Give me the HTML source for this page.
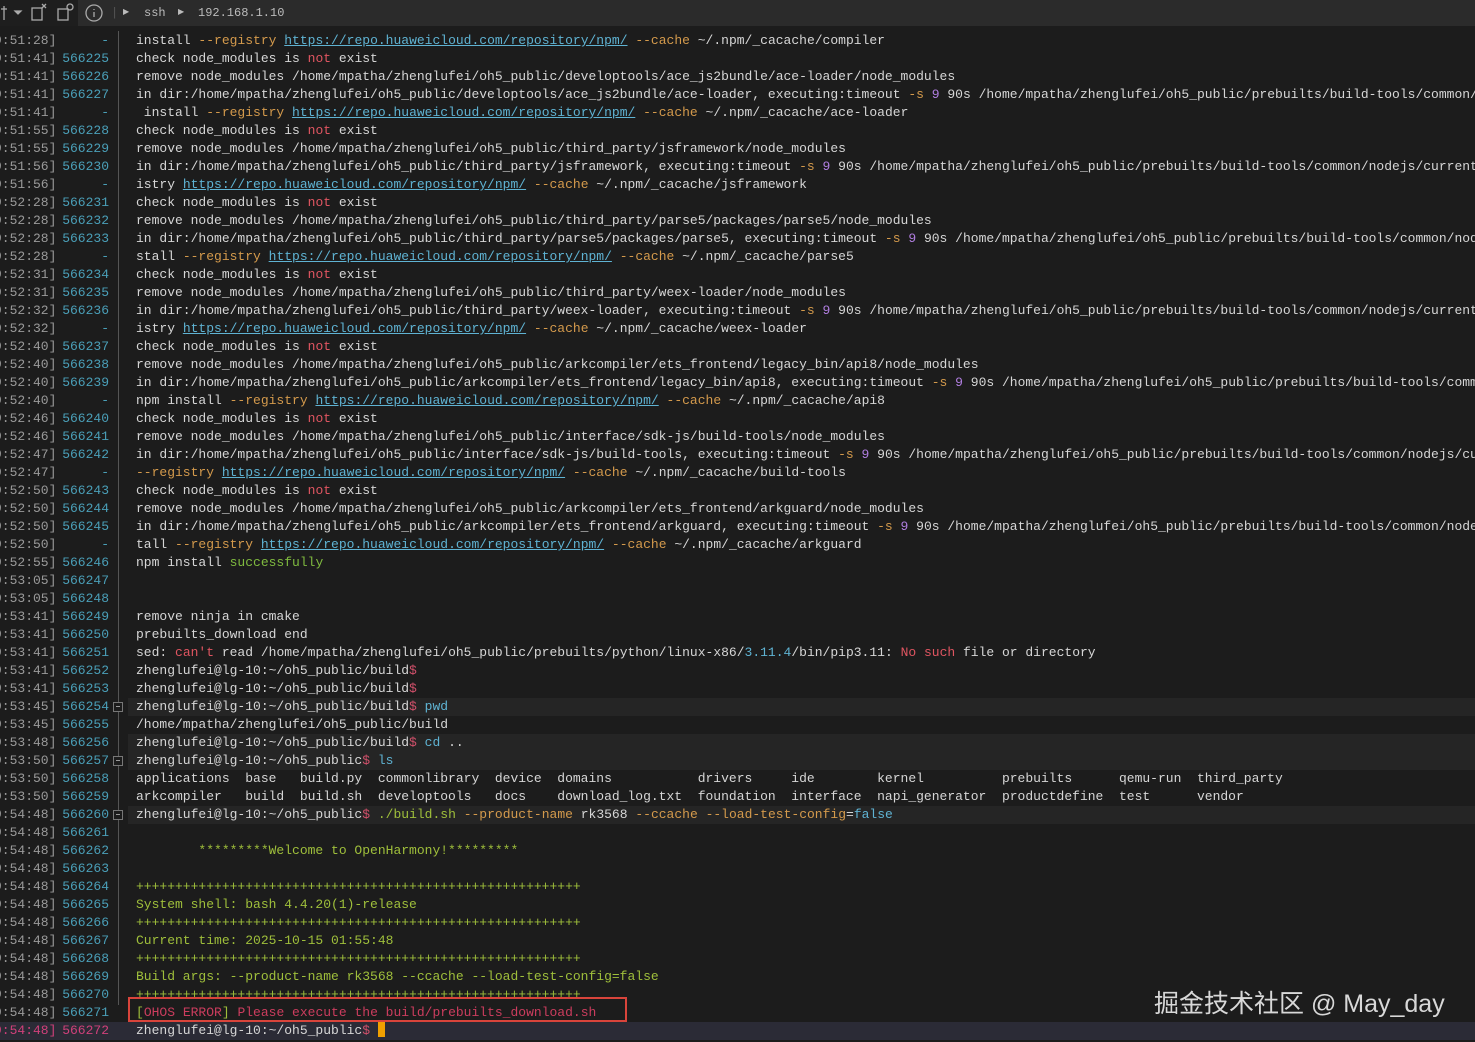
<!DOCTYPE html>
<html><head><meta charset="utf-8"><style>
*{margin:0;padding:0;box-sizing:border-box}
body{width:1475px;height:1042px;overflow:hidden;background:#1c1c1c;font-family:"Liberation Mono",monospace;font-size:13px;color:#d6d6d6;position:relative}
.tb{position:absolute;left:0;top:0;width:1475px;height:26px;background:#1e1e1e}
.tb2{position:absolute;left:78px;top:0;right:0;height:26px;background:#2b2b2b;color:#bbb;font-size:12px;line-height:26px}
#rows{position:absolute;left:0;top:32px;width:1475px}
.r{position:relative;height:18px;line-height:18px;white-space:pre}
.t{position:absolute;left:-6px;color:#9a9a9a}
.n{position:absolute;left:58px;width:51px;text-align:right;color:#4a9fb8}
.x{position:absolute;left:136px;color:#d6d6d6}
.hl{position:absolute;left:128px;right:0;top:0;height:18px;background:#252525}
.o{color:#d49a4c}.u{color:#5fb3d3;text-decoration:underline}.rd{color:#e05561}.p{color:#b07ee0}
.g{color:#7fba3f}.k{color:#d0506a}.c{color:#5fb3d3}.gr{color:#9fbf3b}.er{color:#cc3d5e}
.vl{position:absolute;left:118px;top:31px;width:1px;height:974px;background:#555}
.fb{position:absolute;left:113px;width:10px;height:10px;border:1px solid #777;background:#1c1c1c}
.fb:after{content:"";position:absolute;left:2px;top:3px;width:4px;height:1px;background:#999}
.box{position:absolute;left:128px;top:997px;width:499px;height:25px;border:2px solid #d9443b}
.wm{position:absolute;left:1154px;top:984px;font-family:"Liberation Sans","Noto Sans CJK SC",sans-serif;font-size:25px;color:#d8d8d8}
</style></head><body>
<div class="tb"><svg width="78" height="26" style="position:absolute;left:0;top:0" fill="none" stroke="#aaa" stroke-width="1.3"><path d="M4 6v14M1 9h6"/><path d="M15 11l3 3 3-3z" fill="#aaa"/><rect x="32" y="8" width="10" height="12"/><path d="M42 4l4 4M46 4l-4 4"/><rect x="58" y="9" width="10" height="11"/><circle cx="70" cy="7" r="3"/></svg></div>
<div class="tb2"><svg width="20" height="20" style="position:absolute;left:6px;top:3px" fill="none" stroke="#aaa" stroke-width="1.3"><circle cx="10" cy="10" r="8"/><path d="M10 9v5M10 6v1"/></svg><span style="position:absolute;left:33px;color:#555">|</span><span style="position:absolute;left:45px;font-size:8px">▶</span><span style="position:absolute;left:66px">ssh</span><span style="position:absolute;left:100px;font-size:8px">▶</span><span style="position:absolute;left:120px">192.168.1.10</span></div>
<div class="vl"></div>
<div id="rows">
<div class="r"><span class="t">9:51:28]</span><span class="n">-</span><span class="x">install <span class="o">--registry</span> <span class="u">https://repo.huaweicloud.com/repository/npm/</span> <span class="o">--cache</span> ~/.npm/_cacache/compiler</span></div>
<div class="r"><span class="t">9:51:41]</span><span class="n">566225</span><span class="x">check node_modules is <span class="rd">not</span> exist</span></div>
<div class="r"><span class="t">9:51:41]</span><span class="n">566226</span><span class="x">remove node_modules /home/mpatha/zhenglufei/oh5_public/developtools/ace_js2bundle/ace-loader/node_modules</span></div>
<div class="r"><span class="t">9:51:41]</span><span class="n">566227</span><span class="x">in dir:/home/mpatha/zhenglufei/oh5_public/developtools/ace_js2bundle/ace-loader, executing:timeout <span class="o">-s</span> <span class="p">9</span> 90s /home/mpatha/zhenglufei/oh5_public/prebuilts/build-tools/common/</span></div>
<div class="r"><span class="t">9:51:41]</span><span class="n">-</span><span class="x"> install <span class="o">--registry</span> <span class="u">https://repo.huaweicloud.com/repository/npm/</span> <span class="o">--cache</span> ~/.npm/_cacache/ace-loader</span></div>
<div class="r"><span class="t">9:51:55]</span><span class="n">566228</span><span class="x">check node_modules is <span class="rd">not</span> exist</span></div>
<div class="r"><span class="t">9:51:55]</span><span class="n">566229</span><span class="x">remove node_modules /home/mpatha/zhenglufei/oh5_public/third_party/jsframework/node_modules</span></div>
<div class="r"><span class="t">9:51:56]</span><span class="n">566230</span><span class="x">in dir:/home/mpatha/zhenglufei/oh5_public/third_party/jsframework, executing:timeout <span class="o">-s</span> <span class="p">9</span> 90s /home/mpatha/zhenglufei/oh5_public/prebuilts/build-tools/common/nodejs/current</span></div>
<div class="r"><span class="t">9:51:56]</span><span class="n">-</span><span class="x">istry <span class="u">https://repo.huaweicloud.com/repository/npm/</span> <span class="o">--cache</span> ~/.npm/_cacache/jsframework</span></div>
<div class="r"><span class="t">9:52:28]</span><span class="n">566231</span><span class="x">check node_modules is <span class="rd">not</span> exist</span></div>
<div class="r"><span class="t">9:52:28]</span><span class="n">566232</span><span class="x">remove node_modules /home/mpatha/zhenglufei/oh5_public/third_party/parse5/packages/parse5/node_modules</span></div>
<div class="r"><span class="t">9:52:28]</span><span class="n">566233</span><span class="x">in dir:/home/mpatha/zhenglufei/oh5_public/third_party/parse5/packages/parse5, executing:timeout <span class="o">-s</span> <span class="p">9</span> 90s /home/mpatha/zhenglufei/oh5_public/prebuilts/build-tools/common/nod</span></div>
<div class="r"><span class="t">9:52:28]</span><span class="n">-</span><span class="x">stall <span class="o">--registry</span> <span class="u">https://repo.huaweicloud.com/repository/npm/</span> <span class="o">--cache</span> ~/.npm/_cacache/parse5</span></div>
<div class="r"><span class="t">9:52:31]</span><span class="n">566234</span><span class="x">check node_modules is <span class="rd">not</span> exist</span></div>
<div class="r"><span class="t">9:52:31]</span><span class="n">566235</span><span class="x">remove node_modules /home/mpatha/zhenglufei/oh5_public/third_party/weex-loader/node_modules</span></div>
<div class="r"><span class="t">9:52:32]</span><span class="n">566236</span><span class="x">in dir:/home/mpatha/zhenglufei/oh5_public/third_party/weex-loader, executing:timeout <span class="o">-s</span> <span class="p">9</span> 90s /home/mpatha/zhenglufei/oh5_public/prebuilts/build-tools/common/nodejs/current</span></div>
<div class="r"><span class="t">9:52:32]</span><span class="n">-</span><span class="x">istry <span class="u">https://repo.huaweicloud.com/repository/npm/</span> <span class="o">--cache</span> ~/.npm/_cacache/weex-loader</span></div>
<div class="r"><span class="t">9:52:40]</span><span class="n">566237</span><span class="x">check node_modules is <span class="rd">not</span> exist</span></div>
<div class="r"><span class="t">9:52:40]</span><span class="n">566238</span><span class="x">remove node_modules /home/mpatha/zhenglufei/oh5_public/arkcompiler/ets_frontend/legacy_bin/api8/node_modules</span></div>
<div class="r"><span class="t">9:52:40]</span><span class="n">566239</span><span class="x">in dir:/home/mpatha/zhenglufei/oh5_public/arkcompiler/ets_frontend/legacy_bin/api8, executing:timeout <span class="o">-s</span> <span class="p">9</span> 90s /home/mpatha/zhenglufei/oh5_public/prebuilts/build-tools/comm</span></div>
<div class="r"><span class="t">9:52:40]</span><span class="n">-</span><span class="x">npm install <span class="o">--registry</span> <span class="u">https://repo.huaweicloud.com/repository/npm/</span> <span class="o">--cache</span> ~/.npm/_cacache/api8</span></div>
<div class="r"><span class="t">9:52:46]</span><span class="n">566240</span><span class="x">check node_modules is <span class="rd">not</span> exist</span></div>
<div class="r"><span class="t">9:52:46]</span><span class="n">566241</span><span class="x">remove node_modules /home/mpatha/zhenglufei/oh5_public/interface/sdk-js/build-tools/node_modules</span></div>
<div class="r"><span class="t">9:52:47]</span><span class="n">566242</span><span class="x">in dir:/home/mpatha/zhenglufei/oh5_public/interface/sdk-js/build-tools, executing:timeout <span class="o">-s</span> <span class="p">9</span> 90s /home/mpatha/zhenglufei/oh5_public/prebuilts/build-tools/common/nodejs/cu</span></div>
<div class="r"><span class="t">9:52:47]</span><span class="n">-</span><span class="x"><span class="o">--registry</span> <span class="u">https://repo.huaweicloud.com/repository/npm/</span> <span class="o">--cache</span> ~/.npm/_cacache/build-tools</span></div>
<div class="r"><span class="t">9:52:50]</span><span class="n">566243</span><span class="x">check node_modules is <span class="rd">not</span> exist</span></div>
<div class="r"><span class="t">9:52:50]</span><span class="n">566244</span><span class="x">remove node_modules /home/mpatha/zhenglufei/oh5_public/arkcompiler/ets_frontend/arkguard/node_modules</span></div>
<div class="r"><span class="t">9:52:50]</span><span class="n">566245</span><span class="x">in dir:/home/mpatha/zhenglufei/oh5_public/arkcompiler/ets_frontend/arkguard, executing:timeout <span class="o">-s</span> <span class="p">9</span> 90s /home/mpatha/zhenglufei/oh5_public/prebuilts/build-tools/common/node</span></div>
<div class="r"><span class="t">9:52:50]</span><span class="n">-</span><span class="x">tall <span class="o">--registry</span> <span class="u">https://repo.huaweicloud.com/repository/npm/</span> <span class="o">--cache</span> ~/.npm/_cacache/arkguard</span></div>
<div class="r"><span class="t">9:52:55]</span><span class="n">566246</span><span class="x">npm install <span class="g">successfully</span></span></div>
<div class="r"><span class="t">9:53:05]</span><span class="n">566247</span></div>
<div class="r"><span class="t">9:53:05]</span><span class="n">566248</span></div>
<div class="r"><span class="t">9:53:41]</span><span class="n">566249</span><span class="x">remove ninja in cmake</span></div>
<div class="r"><span class="t">9:53:41]</span><span class="n">566250</span><span class="x">prebuilts_download end</span></div>
<div class="r"><span class="t">9:53:41]</span><span class="n">566251</span><span class="x">sed: <span class="rd">can't</span> read /home/mpatha/zhenglufei/oh5_public/prebuilts/python/linux-x86/<span class="c">3.11.4</span>/bin/pip3.11: <span class="rd">No such</span> file or directory</span></div>
<div class="r"><span class="t">9:53:41]</span><span class="n">566252</span><span class="x">zhenglufei@lg-10:~/oh5_public/build<span class="k">$</span></span></div>
<div class="r"><span class="t">9:53:41]</span><span class="n">566253</span><span class="x">zhenglufei@lg-10:~/oh5_public/build<span class="k">$</span></span></div>
<div class="r"><span class="hl"></span><span class="t">9:53:45]</span><span class="n">566254</span><span class="fb" style="top:4px"></span><span class="x">zhenglufei@lg-10:~/oh5_public/build<span class="k">$</span> <span class="c">pwd</span></span></div>
<div class="r"><span class="t">9:53:45]</span><span class="n">566255</span><span class="x">/home/mpatha/zhenglufei/oh5_public/build</span></div>
<div class="r"><span class="hl"></span><span class="t">9:53:48]</span><span class="n">566256</span><span class="x">zhenglufei@lg-10:~/oh5_public/build<span class="k">$</span> <span class="c">cd</span> ..</span></div>
<div class="r"><span class="hl"></span><span class="t">9:53:50]</span><span class="n">566257</span><span class="fb" style="top:4px"></span><span class="x">zhenglufei@lg-10:~/oh5_public<span class="k">$</span> <span class="c">ls</span></span></div>
<div class="r"><span class="t">9:53:50]</span><span class="n">566258</span><span class="x">applications  base   build.py  commonlibrary  device  domains           drivers     ide        kernel          prebuilts      qemu-run  third_party</span></div>
<div class="r"><span class="t">9:53:50]</span><span class="n">566259</span><span class="x">arkcompiler   build  build.sh  developtools   docs    download_log.txt  foundation  interface  napi_generator  productdefine  test      vendor</span></div>
<div class="r"><span class="hl"></span><span class="t">9:54:48]</span><span class="n">566260</span><span class="fb" style="top:4px"></span><span class="x">zhenglufei@lg-10:~/oh5_public<span class="k">$</span> <span class="gr">./build.sh</span> <span class="o">--product-name</span> rk3568 <span class="o">--ccache</span> <span class="o">--load-test-config</span>=<span class="c">false</span></span></div>
<div class="r"><span class="t">9:54:48]</span><span class="n">566261</span></div>
<div class="r"><span class="t">9:54:48]</span><span class="n">566262</span><span class="x gr">        *********Welcome to OpenHarmony!*********</span></div>
<div class="r"><span class="t">9:54:48]</span><span class="n">566263</span></div>
<div class="r"><span class="t">9:54:48]</span><span class="n">566264</span><span class="x gr">+++++++++++++++++++++++++++++++++++++++++++++++++++++++++</span></div>
<div class="r"><span class="t">9:54:48]</span><span class="n">566265</span><span class="x gr">System shell: bash 4.4.20(1)-release</span></div>
<div class="r"><span class="t">9:54:48]</span><span class="n">566266</span><span class="x gr">+++++++++++++++++++++++++++++++++++++++++++++++++++++++++</span></div>
<div class="r"><span class="t">9:54:48]</span><span class="n">566267</span><span class="x gr">Current time: 2025-10-15 01:55:48</span></div>
<div class="r"><span class="t">9:54:48]</span><span class="n">566268</span><span class="x gr">+++++++++++++++++++++++++++++++++++++++++++++++++++++++++</span></div>
<div class="r"><span class="t">9:54:48]</span><span class="n">566269</span><span class="x gr">Build args: --product-name rk3568 --ccache --load-test-config=false</span></div>
<div class="r"><span class="t">9:54:48]</span><span class="n">566270</span><span class="x gr">+++++++++++++++++++++++++++++++++++++++++++++++++++++++++</span></div>
<div class="r"><span class="t">9:54:48]</span><span class="n">566271</span><span class="x"><span class="gr">[</span><span class="er">OHOS ERROR</span><span class="gr">]</span><span class="er"> Please execute the build/prebuilts_download.sh</span></span></div>
<div class="r" style="background:#2b2b36"><span class="t" style="color:#d0407a">9:54:48]</span><span class="n" style="color:#d0407a">566272</span><span class="x">zhenglufei@lg-10:~/oh5_public<span class="k">$</span> <span style="display:inline-block;width:7px;height:15px;background:#f0a000;vertical-align:-3px"></span></span></div>
</div>
<div class="box"></div>
<div class="wm">掘金技术社区 @ May_day</div>
</body></html>
